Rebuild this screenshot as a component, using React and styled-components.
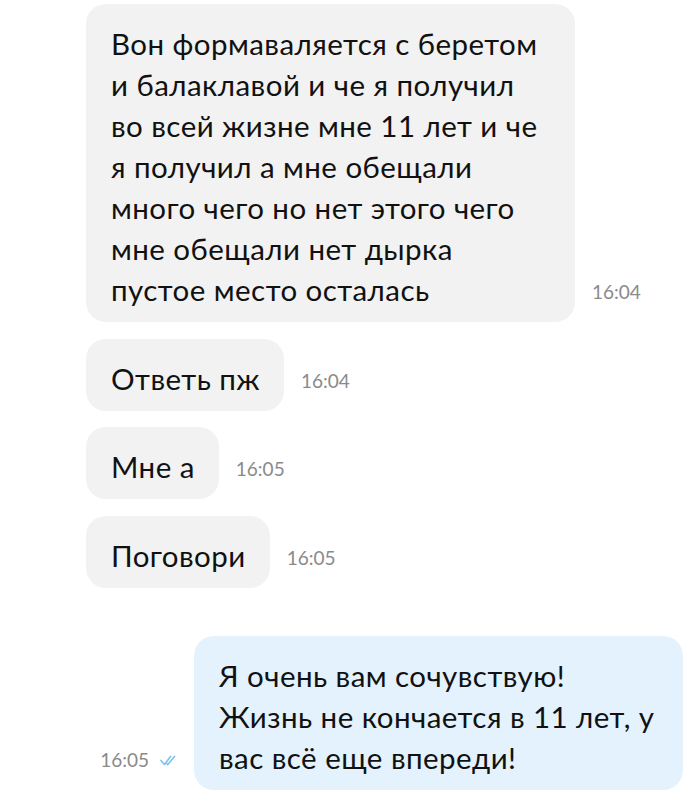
import React from "react";
import styled, { createGlobalStyle } from "styled-components";

const Global = createGlobalStyle`
  html, body { margin: 0; padding: 0; background: #ffffff; }
  body { font-family: Lato, "Noto Sans", sans-serif; }
`;

const Page = styled.div`
  width: 700px;
  height: 798px;
  overflow: hidden;
  box-sizing: border-box;
  padding-top: 4px;
  display: flex;
  flex-direction: column;
`;

const Row = styled.div`
  display: flex;
  align-items: flex-end;
  justify-content: ${(p) => (p.$out ? "flex-end" : "flex-start")};
  padding: ${(p) => (p.$out ? "0 17px 0 0" : "0 0 0 86px")};
  margin-top: ${(p) => p.$gap || 0}px;
  gap: ${(p) => (p.$out ? 18 : 17)}px;
`;

const Bubble = styled.div`
  box-sizing: border-box;
  max-width: 489px;
  padding: 19px 24px 12px 25px;
  border-radius: 20px;
  background: ${(p) => (p.$out ? "#e3f2fc" : "#f2f2f2")};
  color: #111111;
  font-size: 29.5px;
  line-height: 41px;
  letter-spacing: 0.45px;
  white-space: pre-line;
  font-family: Lato, "Noto Sans", sans-serif;
`;

const Meta = styled.div`
  display: flex;
  align-items: center;
  gap: 11px;
  margin-bottom: 20px;
  font-size: 19px;
  line-height: 20px;
  color: #8a8a8a;
  font-family: Lato, "Noto Sans", sans-serif;
`;

const Checks = () => (
  <svg width="16" height="11" viewBox="0 0 16 11" fill="none">
    <path d="M1 5.5 L4.5 9.5 L10.5 1.5" stroke="#80c4ec" strokeWidth="1.7" strokeLinecap="round" strokeLinejoin="round" />
    <path d="M7 8.8 L7.8 9.5 L14.5 1.5" stroke="#80c4ec" strokeWidth="1.7" strokeLinecap="round" strokeLinejoin="round" />
  </svg>
);

const incoming = [
  {
    text: "Вон формаваляется с беретом и балаклавой и че я получил во всей жизне мне 11 лет и че я получил а мне обещали много чего но нет этого чего мне обещали нет дырка пустое место осталась",
    time: "16:04",
    gap: 0,
  },
  { text: "Ответь пж", time: "16:04", gap: 17 },
  { text: "Мне а", time: "16:05", gap: 16 },
  { text: "Поговори", time: "16:05", gap: 17 },
];

export default function App() {
  return (
    <>
      <Global />
      <Page>
        {incoming.map((m, i) => (
          <Row key={i} $gap={m.gap}>
            <Bubble>{m.text}</Bubble>
            <Meta>{m.time}</Meta>
          </Row>
        ))}
        <Row $out $gap={48}>
          <Meta>
            16:05
            <Checks />
          </Meta>
          <Bubble $out>
            {"Я очень вам сочувствую!\nЖизнь не кончается в 11 лет, у вас всё еще впереди!"}
          </Bubble>
        </Row>
      </Page>
    </>
  );
}
